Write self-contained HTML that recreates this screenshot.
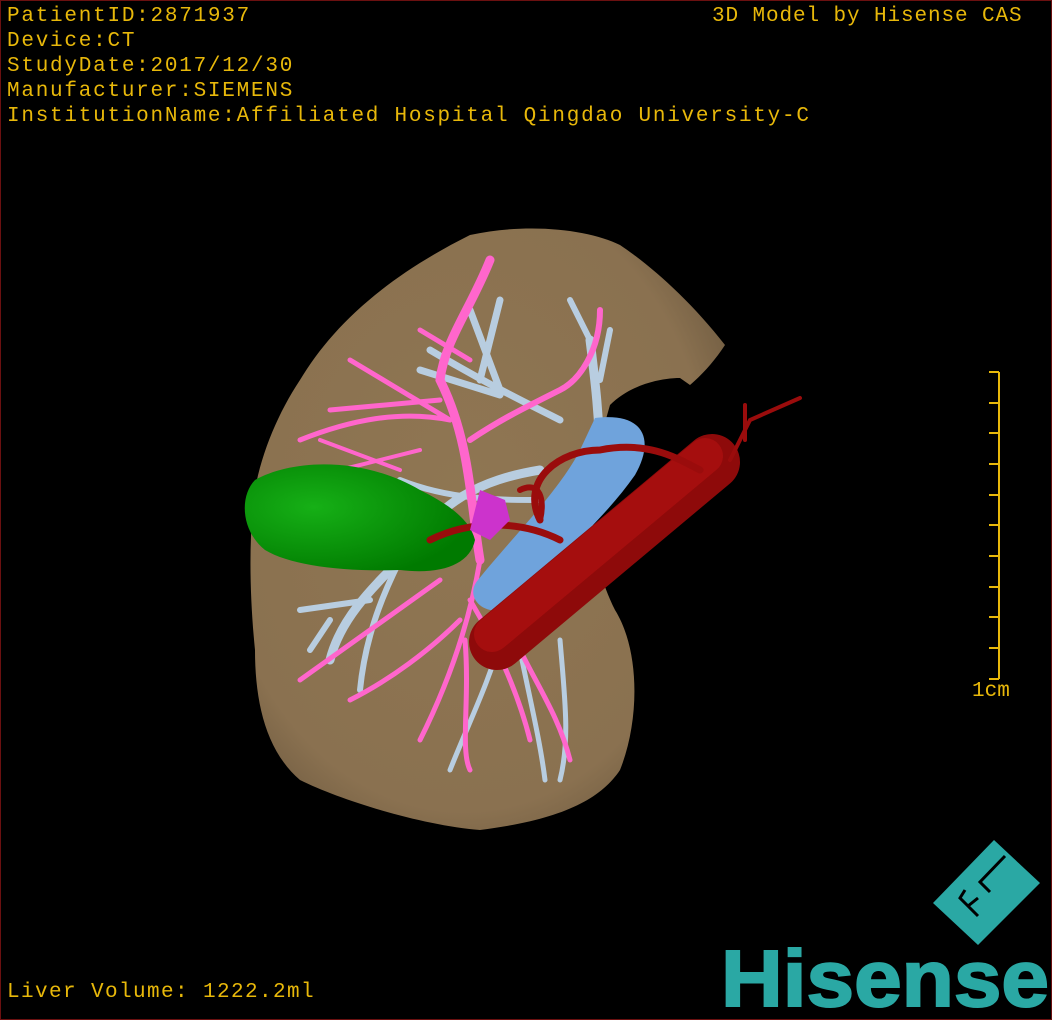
<!DOCTYPE html>
<html><head><meta charset="utf-8"><style>
html,body{margin:0;padding:0;background:#000;}
#f{position:relative;width:1050px;height:1018px;border:1px solid #6b1010;background:#000;overflow:hidden;font-family:"Liberation Mono","Noto Sans CJK SC",monospace;color:#e8b80a;}
.t{position:absolute;font-size:21px;line-height:25px;white-space:pre;letter-spacing:1.75px;}
</style></head><body><div id="f">
<div class="t" style="left:6px;top:3px">PatientID:2871937
Device:CT
StudyDate:2017/12/30
Manufacturer:SIEMENS
InstitutionName:Affiliated Hospital Qingdao University-C</div>
<div class="t" style="left:711px;top:3px;letter-spacing:0.9px">3D Model by Hisense CAS</div>
<div class="t" style="left:6px;top:979px;letter-spacing:1.4px">Liver Volume: 1222.2ml</div>
<div class="t" style="left:971px;top:678px;letter-spacing:0">1cm</div>
<svg width="1052" height="1020" style="position:absolute;left:-1px;top:-1px">
<defs>
<radialGradient id="lg" cx="0.45" cy="0.45" r="0.65"><stop offset="0" stop-color="#8f7652"/><stop offset="0.8" stop-color="#8a7150"/><stop offset="1" stop-color="#6e5a40"/></radialGradient>
<radialGradient id="gg" cx="0.3" cy="0.4" r="0.7"><stop offset="0" stop-color="#16b016"/><stop offset="1" stop-color="#007a00"/></radialGradient>
</defs>
<path d="M470,235 C530,222 590,230 620,245 C650,265 690,300 725,345 C715,360 705,372 690,385 L680,378 C660,378 630,385 610,405 L600,440 C585,520 595,570 615,610 C640,650 640,720 620,770 C600,800 560,820 480,830 C420,825 340,800 300,780 C265,750 255,700 255,650 C250,600 248,540 255,490 C262,450 280,410 300,380 C330,330 380,280 470,235 Z" fill="url(#lg)"/>
<g fill="none" stroke="#b8cde0" stroke-linecap="round">
<path d="M520,640 C540,590 570,540 600,470 C600,420 595,380 590,340" stroke-width="9"/>
<path d="M590,340 L570,300 M600,380 L610,330" stroke-width="6"/>
<path d="M540,470 C480,480 440,500 400,560 C370,590 340,620 330,660" stroke-width="9"/>
<path d="M400,560 C380,600 365,640 360,690 M370,600 L300,610 M330,620 L310,650" stroke-width="6"/>
<path d="M560,420 C520,400 480,380 430,350 M500,390 L470,310 M500,395 L420,370 M480,380 L500,300" stroke-width="7"/>
<path d="M540,500 C500,500 450,500 400,480 M440,520 L330,500" stroke-width="6"/>
<path d="M500,640 C490,680 470,720 450,770 M520,650 C530,700 540,740 545,780 M560,640 C565,700 570,740 560,780" stroke-width="5"/>
</g>
<g fill="none" stroke="#ff66cc" stroke-linecap="round">
<path d="M480,560 C470,500 470,440 440,380 C445,340 470,310 490,260" stroke-width="9"/>
<path d="M470,440 C500,420 520,410 560,390 C580,380 600,350 600,310" stroke-width="6"/>
<path d="M450,420 C400,410 350,420 300,440 M450,420 L350,360 M470,360 L420,330 M440,400 L330,410" stroke-width="5"/>
<path d="M480,560 C470,620 450,680 420,740 M460,620 C430,650 390,680 350,700 M470,600 C500,650 520,700 530,740 M465,640 C470,700 460,750 470,770 M440,580 L300,680 M520,650 C540,690 560,720 570,760" stroke-width="5"/>
<path d="M420,450 L340,470 M400,470 L320,440" stroke-width="4"/>
</g>
<path d="M595,418 C645,412 655,440 635,475 C600,525 545,570 505,610 C480,615 465,595 478,580 C510,540 560,490 580,450 Z" fill="#6fa3dc"/>
<path d="M255,480 C290,460 360,455 420,490 C450,505 470,520 475,540 C470,565 440,575 400,570 C340,572 290,565 265,550 C240,530 240,495 255,480 Z" fill="url(#gg)"/>
<line x1="497" y1="642" x2="712" y2="462" stroke="#8e0a0a" stroke-width="56" stroke-linecap="round"/>
<line x1="492" y1="634" x2="705" y2="456" stroke="#a50e0e" stroke-width="36" stroke-linecap="round"/>
<g fill="none" stroke="#9a0c0c" stroke-linecap="round">
<path d="M430,540 C470,520 520,520 560,540 M540,520 C520,480 560,450 600,450 C650,440 680,460 700,470" stroke-width="7"/>
<path d="M730,460 L750,420 L800,398 M745,440 L745,405" stroke-width="4"/>
<path d="M540,520 C545,500 540,480 520,490" stroke-width="6"/>
</g>
<path d="M480,490 L505,500 L510,520 L490,540 L470,530 Z" fill="#cc33cc"/>
<line x1="999" y1="372" x2="999" y2="679" stroke="#e8b80a" stroke-width="2"/>
<g stroke="#e8b80a" stroke-width="2">
<line x1="989" y1="372" x2="999" y2="372"/><line x1="989" y1="403" x2="999" y2="403"/><line x1="989" y1="433" x2="999" y2="433"/><line x1="989" y1="464" x2="999" y2="464"/><line x1="989" y1="495" x2="999" y2="495"/><line x1="989" y1="525" x2="999" y2="525"/><line x1="989" y1="556" x2="999" y2="556"/><line x1="989" y1="587" x2="999" y2="587"/><line x1="989" y1="617" x2="999" y2="617"/><line x1="989" y1="648" x2="999" y2="648"/><line x1="989" y1="679" x2="999" y2="679"/>
</g>
<polygon points="933,903 994,840 1040,883 978,945" fill="#2aa8a4"/>
<path d="M1005,856 L980,882 L990,892 M965,890 L960,898 L978,916 M960,898 L968,906 L978,898" stroke="#000" stroke-width="3" fill="none"/>
<text x="721" y="1006" font-family="Liberation Sans,sans-serif" font-weight="bold" font-size="80" fill="#2aa8a4" stroke="#2aa8a4" stroke-width="2" textLength="328" lengthAdjust="spacingAndGlyphs">Hisense</text>
</svg>
</div></body></html>
